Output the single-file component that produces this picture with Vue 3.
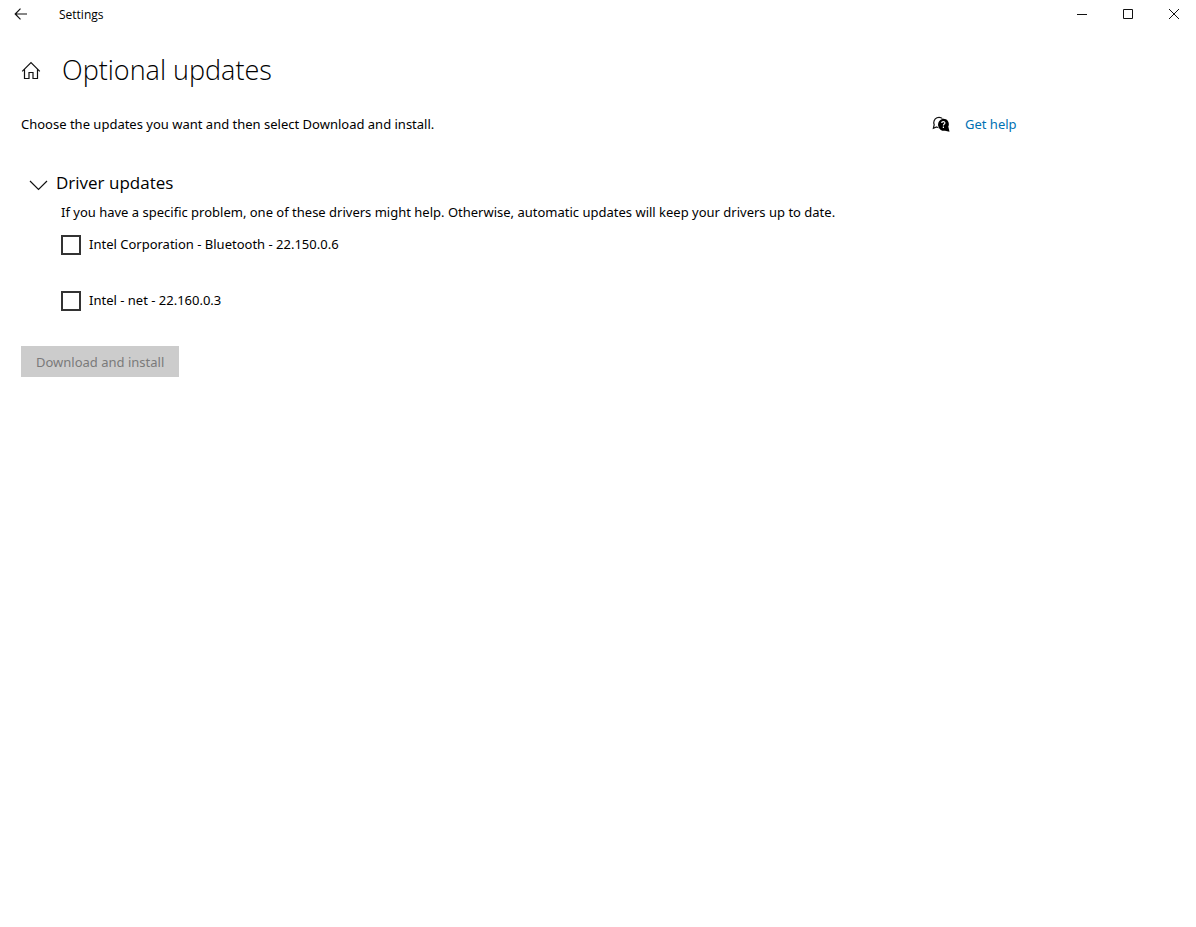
<script setup>
import { ref } from 'vue'

const open = ref(true)
const drivers = ref([
  { id: 'bluetooth', name: 'Intel Corporation - Bluetooth - 22.150.0.6', selected: false },
  { id: 'net', name: 'Intel - net - 22.160.0.3', selected: false }
])
</script>

<template>
  <div class="window">
    <header class="titlebar">
      <button class="back" type="button" aria-label="Back">
        <svg width="14" height="12" viewBox="0 0 14 12"><path d="M13 6H1.2M6.5 .7 1.2 6l5.3 5.3" /></svg>
      </button>
      <span class="app-name">Settings</span>
      <div class="captions">
        <button type="button" aria-label="Minimize">
          <svg width="12" height="12" viewBox="0 0 12 12"><path d="M1 6.5h10" /></svg>
        </button>
        <button type="button" aria-label="Maximize">
          <svg width="12" height="12" viewBox="0 0 12 12"><path d="M1.5 1.5h9v9h-9z" /></svg>
        </button>
        <button type="button" aria-label="Close">
          <svg width="12" height="12" viewBox="0 0 12 12"><path d="m1 1 10 10M11 1 1 11" /></svg>
        </button>
      </div>
    </header>

    <main class="page">
      <div class="heading">
        <button class="home" type="button" aria-label="Home">
          <svg width="20" height="20" viewBox="0 0 20 20"><path d="M1.200 11.300 10 2.500l8.800 8.800M3.500 9.500v9h4.500v-6h4v6h4.500v-9" /></svg>
        </button>
        <h1>Optional updates</h1>
      </div>

      <div class="columns">
        <div class="content">
          <p class="intro">Choose the updates you want and then select Download and install.</p>
          <section>
            <h2>
              <button class="expander" type="button" :aria-expanded="open" @click="open = !open">
                <svg width="20" height="12" viewBox="0 0 20 12"><path d="m2 2 8.500 8.500L19 2" /></svg>
                <span>Driver updates</span>
              </button>
            </h2>
            <div v-if="open" class="drivers">
              <p>If you have a specific problem, one of these drivers might help. Otherwise, automatic updates will keep your drivers up to date.</p>
              <ul>
                <li v-for="driver in drivers" :key="driver.id">
                  <input :id="driver.id" v-model="driver.selected" type="checkbox" />
                  <label :for="driver.id">{{ driver.name }}</label>
                </li>
              </ul>
            </div>
          </section>
          <button class="install" type="button" :disabled="!drivers.some(d => d.selected)">Download and install</button>
        </div>

        <aside>
          <svg width="18" height="18" viewBox="0 0 18 18">
            <path class="bubble" d="M1.400 13.200 2.200 9.700A5.200 5.200 0 1 1 11.900 5.500 5.200 5.200 0 0 1 4.600 12z" />
            <path class="solid" d="M11.300 3.700a5.500 5.500 0 0 1 5 7.900l1.200 5.200-4.500-1A5.700 5.700 0 1 1 11.300 3.700z" />
            <path class="mark" d="M9.700 8c0-1.900 3.200-1.900 3.200-.1 0 1.200-1.500 1.200-1.500 2.500M11.400 11.600v1.300" />
          </svg>
          <a href="#help">Get help</a>
        </aside>
      </div>
    </main>
  </div>
</template>

<style>
body {
  background: #fff;
}
</style>

<style scoped>
.window {
  min-height: 100vh;
  color: #000;
  background: #fff;
  font: 13px/20px "Noto Sans", "Open Sans", sans-serif;
}

h1,
h2,
p,
ul {
  margin: 0;
  padding: 0;
  font-weight: 400;
}

button {
  padding: 0;
  border: 0;
  background: none;
  color: inherit;
  font: inherit;
}

svg {
  display: block;
  flex: none;
  fill: none;
  stroke: #111;
  stroke-width: 1.2;
}

.titlebar {
  display: flex;
  align-items: center;
  height: 28px;
}

.back {
  padding: 8px 14px;
}

.app-name {
  margin-left: 17px;
  padding-top: 2px;
  font-family: "Open Sans", sans-serif;
  font-size: 12px;
}

.captions {
  display: flex;
  margin: 0 -1px 0 auto;
}

.captions button {
  display: grid;
  place-items: center;
  width: 46px;
  height: 28px;
}

.captions svg {
  stroke-width: 1;
}

.page {
  padding: 22px 20px;
}

.heading {
  display: flex;
  align-items: center;
  height: 40px;
}

h1 {
  margin-left: 21px;
  font-family: "Open Sans", sans-serif;
  font-size: 27px;
  font-weight: 320;
  line-height: 40px;
}

.home {
  margin-left: 1px;
}

.columns {
  display: flex;
  align-items: flex-start;
  margin-top: 24px;
}

.content {
  flex: 0 1 912px;
}

.intro {
  margin-left: 1px;
}

section {
  margin-top: 36px;
}

.expander {
  display: flex;
  align-items: center;
  gap: 8px;
  margin-left: 8px;
  font-family: "Open Sans", sans-serif;
  font-size: 17px;
  line-height: 26px;
}

.expander svg {
  margin-top: 4px;
}

.drivers {
  padding: 6px 0 0 41px;
}

ul {
  list-style: none;
}

li {
  display: flex;
  align-items: center;
  gap: 8px;
  margin: 12px 0 34px;
}

li:last-child {
  margin-bottom: 0;
}

label {
  padding-bottom: 2px;
}

input {
  appearance: none;
  width: 20px;
  height: 20px;
  margin: 0;
  border: 2px solid #333;
  background: #fff;
}

input:checked {
  background: #0067b8;
}

.install {
  margin: 34px 0 0 1px;
  padding: 0 15px;
  height: 31px;
  background: #ccc;
}

.install:disabled {
  color: #7a7a7a;
}

aside {
  display: flex;
  align-items: center;
  gap: 15px;
}

a {
  color: #0071b3;
  text-decoration: none;
}

.solid {
  fill: #000;
  stroke: #fff;
  stroke-width: 1;
  paint-order: stroke;
}

.mark {
  stroke: #fff;
}
</style>
